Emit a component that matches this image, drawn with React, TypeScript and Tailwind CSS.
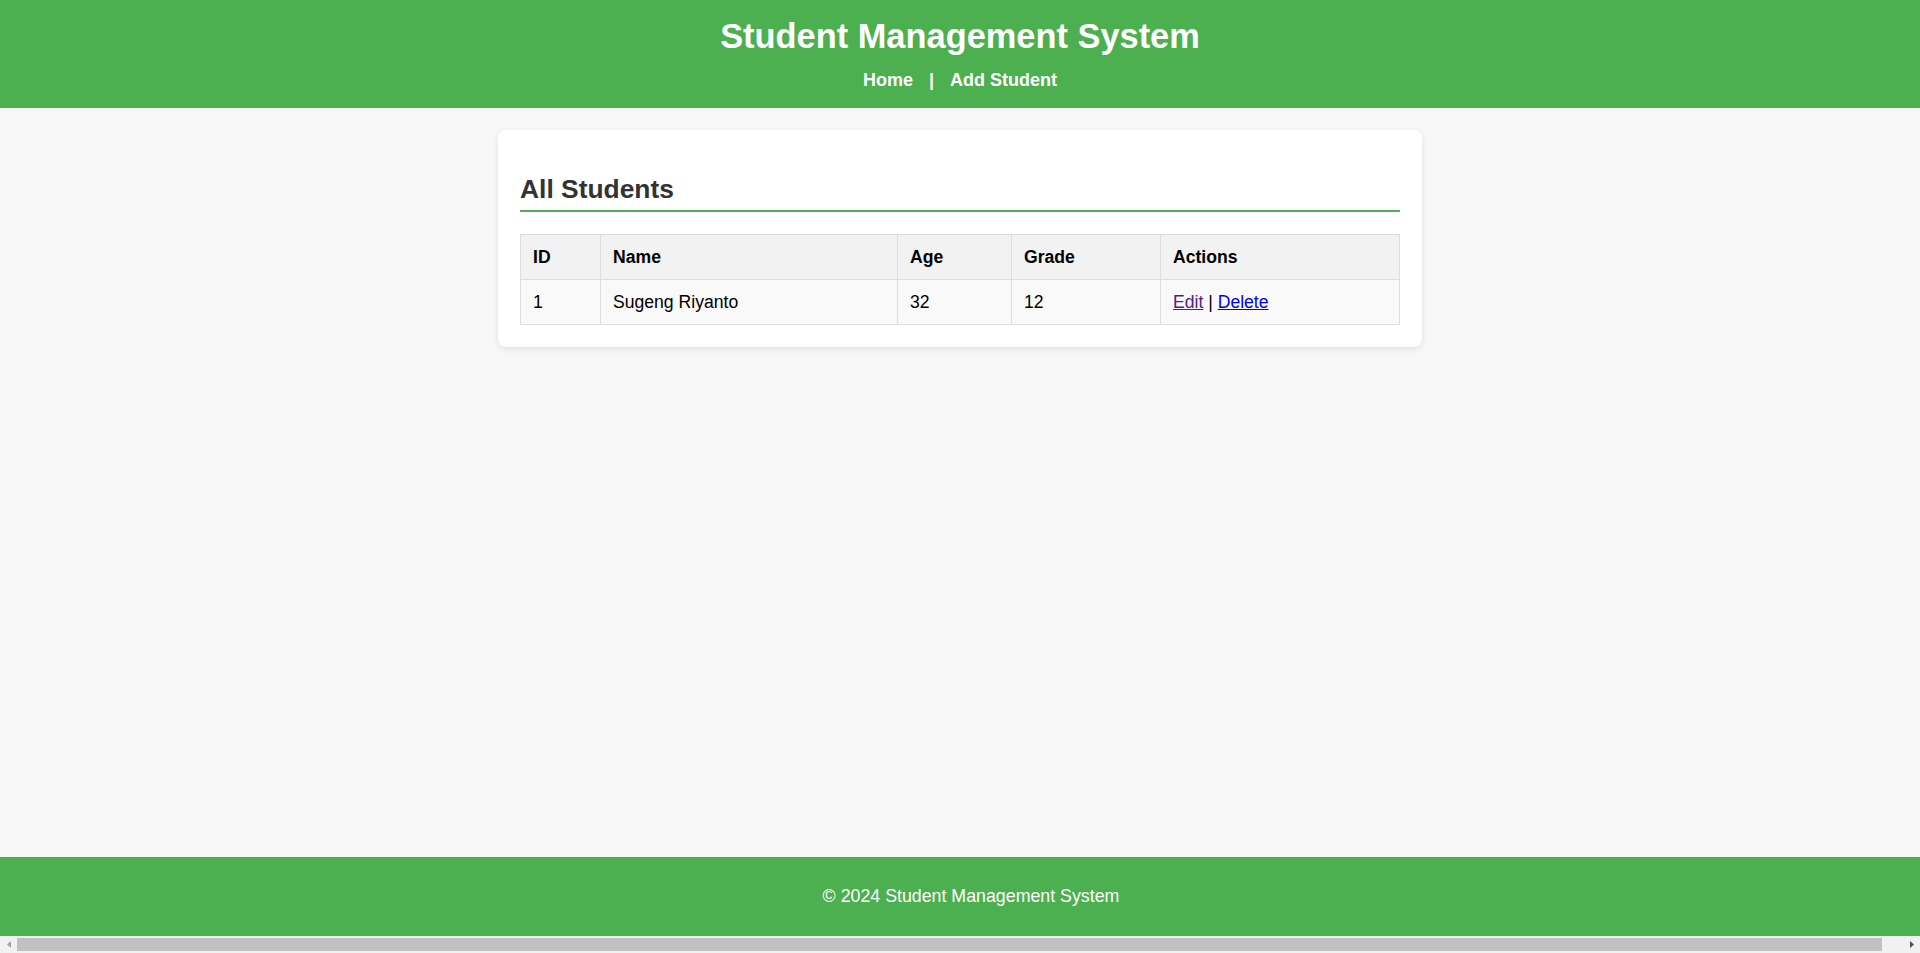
const students = [{ id: 1, name: 'Sugeng Riyanto', age: 32, grade: 12 }];

const cellClass = 'border border-[#dddddd] p-[12px] text-left';

function ScrollArrow({ dir, color }: { dir: 'left' | 'right'; color: string }) {
  return (
    <div className="flex h-full w-[17px] items-center justify-center">
      <svg width="4" height="7" viewBox="0 0 4 7">
        <path d={dir === 'left' ? 'M4 0 L0 3.5 L4 7 Z' : 'M0 0 L4 3.5 L0 7 Z'} fill={color} />
      </svg>
    </div>
  );
}

export default function App() {
  return (
    <div className="flex h-[953px] flex-col overflow-hidden bg-[#f8f8f8] font-['Liberation_Sans',Arial,sans-serif] text-[17.6px] text-black">
      <header className="bg-[#4caf50] pt-[16px] pb-[17px] text-center text-white">
        <h1 className="text-[34.4px] leading-[40.4px] font-bold">Student Management System</h1>
        <nav className="mt-[14px] text-[18px] leading-[20.2px] font-bold">
          <a href="#" className="mx-[11px] text-white no-underline">
            Home
          </a>{' '}
          |{' '}
          <a href="#" className="mx-[11px] text-white no-underline">
            Add Student
          </a>
        </nav>
      </header>

      <main className="flex-1 pt-[22px]">
        <div className="mx-auto w-[924px] rounded-[8px] bg-white p-[22px] shadow-[0_2px_6px_rgba(0,0,0,0.1)]">
          <h2 className="mt-[22px] mb-[22px] border-b-2 border-[#4caf50] pb-[6px] text-[26.4px] leading-[30.3px] font-bold text-[#333333]">
            All Students
          </h2>
          <table className="w-full table-fixed border-collapse leading-[20.2px]">
            <colgroup>
              <col className="w-[80px]" />
              <col className="w-[297px]" />
              <col className="w-[114px]" />
              <col className="w-[149px]" />
              <col />
            </colgroup>
            <thead>
              <tr className="bg-[#f2f2f2]">
                <th className={`${cellClass} font-bold`}>ID</th>
                <th className={`${cellClass} font-bold`}>Name</th>
                <th className={`${cellClass} font-bold`}>Age</th>
                <th className={`${cellClass} font-bold`}>Grade</th>
                <th className={`${cellClass} font-bold`}>Actions</th>
              </tr>
            </thead>
            <tbody>
              {students.map((s) => (
                <tr key={s.id} className="bg-[#f9f9f9]">
                  <td className={cellClass}>{s.id}</td>
                  <td className={cellClass}>{s.name}</td>
                  <td className={cellClass}>{s.age}</td>
                  <td className={cellClass}>{s.grade}</td>
                  <td className={cellClass}>
                    <a href="#" className="text-[#551a8b] underline">
                      Edit
                    </a>{' '}
                    |{' '}
                    <a href="#" className="text-[#0000ee] underline">
                      Delete
                    </a>
                  </td>
                </tr>
              ))}
            </tbody>
          </table>
        </div>
      </main>

      <footer className="flex h-[79px] shrink-0 items-center justify-center bg-[#4caf50] pl-[22px] text-[17.8px] text-white">
        © 2024 Student Management System
      </footer>

      {/* horizontal scrollbar of the page */}
      <div className="flex h-[17px] shrink-0 items-center bg-[#f1f1f1]">
        <ScrollArrow dir="left" color="#a3a3a3" />
        <div className="h-[13px] w-[1865px] bg-[#c1c1c1]" />
        <div className="flex-1" />
        <ScrollArrow dir="right" color="#505050" />
      </div>
    </div>
  );
}
